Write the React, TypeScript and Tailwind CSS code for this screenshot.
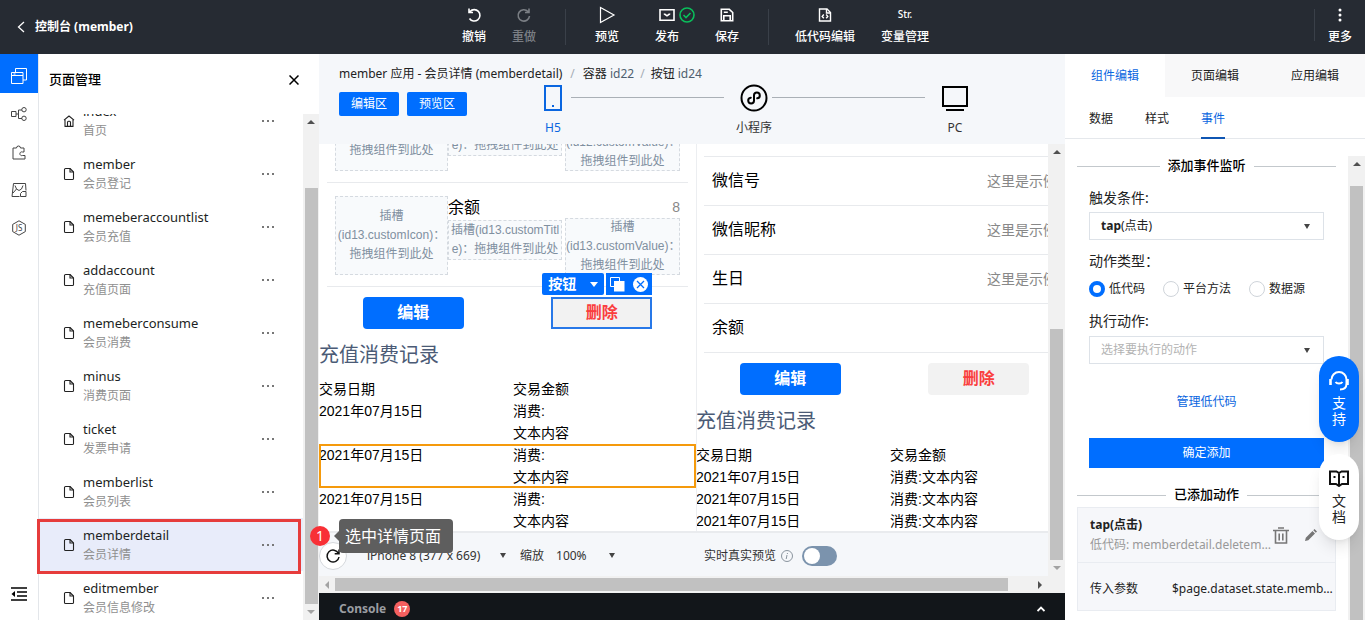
import { useState } from 'react'
import type { ReactNode } from 'react'

interface PageItem {
  name: string
  title: string
  home?: boolean
}

const pages: PageItem[] = [
  { name: 'index', title: '首页', home: true },
  { name: 'member', title: '会员登记' },
  { name: 'memeberaccountlist', title: '会员充值' },
  { name: 'addaccount', title: '充值页面' },
  { name: 'memeberconsume', title: '会员消费' },
  { name: 'minus', title: '消费页面' },
  { name: 'ticket', title: '发票申请' },
  { name: 'memberlist', title: '会员列表' },
  { name: 'memberdetail', title: '会员详情' },
  { name: 'editmember', title: '会员信息修改' },
]

const ACTIVE_PAGE = 'memberdetail'

function ToolButton({ icon, label, wide, disabled }: { icon: ReactNode; label: string; wide?: boolean; disabled?: boolean }) {
  return (
    <button
      disabled={disabled}
      className={`flex flex-col items-center text-xs font-medium ${wide ? 'w-20' : 'w-[50px]'} ${
        disabled ? 'text-[#7b7f85]' : 'text-white'
      }`}
    >
      <span className="flex h-5 items-center justify-center gap-1">{icon}</span>
      <span className="mt-0.5 leading-5">{label}</span>
    </button>
  )
}

function Arrow({ dir, muted }: { dir: 'up' | 'down' | 'left' | 'right'; muted?: boolean }) {
  const points = {
    up: '4,10 8,6 12,10',
    down: '4,6 8,10 12,6',
    left: '10,4 6,8 10,12',
    right: '6,4 10,8 6,12',
  }
  return (
    <svg viewBox="0 0 16 16" className={`h-4 w-4 flex-none ${muted ? 'fill-[#a3a3a3]' : 'fill-[#505050]'}`}>
      <polygon points={points[dir]} />
    </svg>
  )
}

function Caret({ className }: { className: string }) {
  return (
    <svg viewBox="0 0 6 5" className={`pointer-events-none h-[5px] w-1.5 flex-none ${className}`}>
      <path d="M0 0h6L3 5z" fill="currentColor" />
    </svg>
  )
}

function FileIcon() {
  return (
    <svg viewBox="0 0 12 14" className="h-3.5 w-3 flex-none" fill="none" stroke="#222" strokeWidth="1.1">
      <path d="M7 1.5H2.6a1.1 1.1 0 0 0-1.1 1.1v8.8a1.1 1.1 0 0 0 1.1 1.1h6.8a1.1 1.1 0 0 0 1.1-1.1V5z" strokeLinejoin="round" />
      <path d="M7 1.5V5h3.5" />
    </svg>
  )
}

function HomeIcon() {
  return (
    <svg viewBox="0 0 12 14" className="h-3.5 w-3 flex-none" fill="none" stroke="#222" strokeWidth="1.1">
      <path d="M1 6.2 6 2l5 4.2M2 5.5v6.9h8V5.5" strokeLinejoin="round" />
      <path d="M4.5 12.4V8.2a1 1 0 0 1 1-1h1a1 1 0 0 1 1 1v4.2" />
    </svg>
  )
}

function Header() {
  return (
    <header className="flex h-[54px] flex-none bg-[#262b33] text-white">
      <a href="#" className="flex w-[449px] flex-none items-center gap-2.5 pl-[17px] text-xs font-bold">
        <svg viewBox="0 0 8 12" className="h-3 w-2" fill="none" stroke="currentColor" strokeWidth="1.3">
          <path d="M7 1 1.5 6 7 11" />
        </svg>
        控制台 (member)
      </a>
      <div className="flex pt-[5px]">
        <ToolButton
          label="撤销"
          icon={
            <svg viewBox="0 0 16 16" className="h-4 w-4" fill="none" stroke="currentColor" strokeWidth="1.6">
              <path d="M3 1.5v4h4M4 4.5A5.7 5.7 0 1 1 3.5 11.5" />
            </svg>
          }
        />
        <ToolButton
          label="重做"
          disabled
          icon={
            <svg viewBox="0 0 16 16" className="h-4 w-4" fill="none" stroke="currentColor" strokeWidth="1.6">
              <path d="M13 1.5v4H9M12 4.5A5.7 5.7 0 1 0 13.5 9" />
            </svg>
          }
        />
      </div>
      <div className="mx-4 my-[9px] w-px bg-[#3a4049]" />
      <div className="flex gap-2.5 pt-[5px]">
        <ToolButton
          label="预览"
          icon={
            <svg viewBox="0 0 18 18" className="h-[18px] w-[18px]" fill="none" stroke="currentColor" strokeWidth="1.2">
              <path d="M2.5 1.5v15L16 9z" />
            </svg>
          }
        />
        <ToolButton
          label="发布"
          icon={
            <>
              <svg viewBox="0 0 16 14" className="ml-5 h-3.5 w-4 flex-none" fill="none" stroke="currentColor" strokeWidth="1.6">
                <path d="M1 1.8h14v10.4H1zM5.5 5.5V6L8 7.8 10.5 6v-.5" />
              </svg>
              <svg viewBox="0 0 16 16" className="h-4 w-4 flex-none" fill="none" stroke="#0abf5b" strokeWidth="1.6">
                <circle cx="8" cy="8" r="7" />
                <path d="m4.5 8 2.5 2.5L11.5 6" />
              </svg>
            </>
          }
        />
        <ToolButton
          label="保存"
          icon={
            <svg viewBox="0 0 14 14" className="h-3.5 w-3.5" fill="none" stroke="currentColor" strokeWidth="1.6">
              <path d="M1.3 1.3h8l3.4 3.2v8.2H1.3z" />
              <path d="M3.8 12.5V7.8h6.4v4.7M3.8 4.3h4" />
            </svg>
          }
        />
      </div>
      <div className="mx-4 my-[9px] w-px bg-[#3a4049]" />
      <div className="flex pt-[5px]">
        <ToolButton
          label="低代码编辑"
          wide
          icon={
            <svg viewBox="0 0 14 14" className="h-3.5 w-3.5" fill="none" stroke="currentColor" strokeWidth="1.4">
              <path d="M1.5 1H9l3.5 3.5V13h-11z" />
              <path d="M8.5 1v4h4M5.8 6.5 4.2 8.4l1.6 1.9M8.2 6.5l1.6 1.9-1.6 1.9" />
            </svg>
          }
        />
        <ToolButton label="变量管理" wide icon={<span className="text-[10px]">Str.</span>} />
      </div>
      <div className="ml-auto flex pt-[5px]">
        <div className="my-1 h-8 w-px bg-[#3a4049]" />
        <ToolButton
          label="更多"
          icon={
            <svg viewBox="0 0 4 14" className="h-3.5 w-1" fill="currentColor">
              <circle cx="2" cy="2" r="1.5" />
              <circle cx="2" cy="7" r="1.5" />
              <circle cx="2" cy="12" r="1.5" />
            </svg>
          }
        />
      </div>
    </header>
  )
}

function SideNav() {
  const item = 'flex h-[38px] w-full items-center justify-center pt-1'
  const line = { fill: 'none', stroke: 'currentColor', strokeWidth: 1 }
  return (
    <nav className="flex w-[39px] flex-none flex-col border-r border-[#e3e6ea] bg-white text-[#444]">
      <button aria-label="页面" className="flex h-[39px] w-[38px] items-center justify-center bg-[#006eff] pt-1 text-white">
        <svg viewBox="0 0 16 16" className="h-4 w-4" {...line}>
          <path d="M.5 4.5H12v11H.5zM.5 7.5H12M4.5 4.5v-4h11V12H12M2.5 6h2" />
        </svg>
      </button>
      <button aria-label="数据" className={item}>
        <svg viewBox="0 0 16 16" className="h-4 w-4" {...line}>
          <path d="M.5 5.5H5v5H.5zM5 8h2.5M11 4H7.5v8.5H11" />
          <circle cx="13" cy="3.7" r="2.2" />
          <circle cx="13" cy="12.3" r="2.2" />
        </svg>
      </button>
      <button aria-label="组件" className={item}>
        <svg viewBox="0 0 16 16" className="h-4 w-4" {...line}>
          <path d="M2 4h3.5a2 2 0 1 1 4 0H13v4h-1.500a1.9 1.9 0 1 0 0 3.5H14V15H2z" />
        </svg>
      </button>
      <button aria-label="素材" className={item}>
        <svg viewBox="0 0 16 16" className="h-4 w-4" {...line}>
          <path d="M8.5 14.5H1l1.500-13h12l.5 7M4 3.500 5.500 7 8 8.500 10.500 7 12 3.500M2 11l3.500-4M15 14.500H9.500v-3l2-2H15z" />
        </svg>
      </button>
      <button aria-label="低代码" className={item}>
        <svg viewBox="0 0 16 16" className="h-4 w-4" {...line}>
          <path d="M8 .8 14.3 4.4v7.2L8 15.2 1.7 11.6V4.4z" />
          <text x="8" y="11" textAnchor="middle" fontSize="8" fill="currentColor" stroke="none">JS</text>
        </svg>
      </button>
      <button aria-label="收起" className="mt-auto mb-4 flex h-5 w-full items-center justify-center text-black">
        <svg viewBox="0 0 16 14" className="h-3.5 w-4" fill="none" stroke="currentColor" strokeWidth="1.5">
          <path d="M0 1h16M6 5h10M6 9h10M0 13h16" />
          <path d="M4 4v6L.5 7z" fill="currentColor" stroke="none" />
        </svg>
      </button>
    </nav>
  )
}

function PagePanel() {
  return (
    <aside className="flex w-[280px] flex-none flex-col bg-white">
      <div className="flex h-[60px] flex-none items-center justify-between pr-5 pb-2 pl-2.5">
        <h2 className="text-[13px] font-medium text-black">页面管理</h2>
        <button aria-label="关闭">
          <svg viewBox="0 0 10 10" className="h-2.5 w-2.5" fill="none" stroke="#000" strokeWidth="1.5">
            <path d="m.5.5 9 9M9.5.5l-9 9" />
          </svg>
        </button>
      </div>
      <div className="flex min-h-0 flex-1">
        <ul className="min-w-0 flex-1 overflow-hidden">
          {pages.map((page) => (
            <li
              key={page.name}
              className={`flex h-[53px] items-center pr-[29px] pl-6 first:-mt-5 ${page.name === ACTIVE_PAGE ? 'bg-[#e8ecfa]' : ''}`}
            >
              {page.home ? <HomeIcon /> : <FileIcon />}
              <a href="#" className="ml-2 flex min-w-0 flex-1 flex-col">
                <span className="text-[13px] leading-5 text-[#1c1f24]">{page.name}</span>
                <span className="text-xs leading-[19px] text-[#8f8f8f]">{page.title}</span>
              </a>
              <button aria-label="更多操作">
                <svg viewBox="0 0 12 2" className="h-0.5 w-3 fill-[#777]">
                  <path d="M0 0h2v2H0zM5 0h2v2H5zM10 0h2v2h-2z" />
                </svg>
              </button>
            </li>
          ))}
        </ul>
        <div className="flex w-4 flex-none flex-col items-center bg-[#f1f1f1]">
          <Arrow dir="up" />
          <div className="h-[58px]" />
          <div className="w-[13px] flex-1 bg-[#c1c1c1]" />
          <Arrow dir="down" muted />
        </div>
      </div>
    </aside>
  )
}

function DeviceTab({ label, active, children }: { label: string; active?: boolean; children: ReactNode }) {
  return (
    <button className={`flex w-9 flex-none flex-col items-center text-xs ${active ? 'text-[#0a66e0]' : 'text-[#333]'}`}>
      <span className="flex h-7 items-center">{children}</span>
      <span className="mt-1.5 leading-5">{label}</span>
    </button>
  )
}

function CanvasHeader() {
  return (
    <div className="h-[90px] flex-none overflow-hidden px-5 pt-2.5">
      <div className="flex h-5 items-center text-xs text-[#4f5f6f]">
        <span className="text-[#222]">member 应用 - 会员详情 (memberdetail)</span>
        <span className="px-2 text-[#a5adb5]">/</span>
        <span><span className="text-[#222]">容器</span> id22</span>
        <span className="px-1.5 text-[#a5adb5]">/</span>
        <span><span className="text-[#222]">按钮</span> id24</span>
      </div>
      <div className="flex">
        <div className="flex flex-none gap-2 pt-2">
          <button className="h-6 w-[60px] rounded-xs bg-[#006eff] text-xs text-white">编辑区</button>
          <button className="h-6 w-[60px] rounded-xs bg-[#006eff] text-xs text-white">预览区</button>
        </div>
        <div className="ml-[68px] flex">
          <DeviceTab label="H5" active>
            <svg viewBox="0 0 18 26" className="h-[26px] w-[18px]" fill="none" stroke="currentColor" strokeWidth="2">
              <path d="M1 1h16v24H1z" />
              <path d="M8 21h2" />
            </svg>
          </DeviceTab>
          <div className="mt-[13px] mr-3 h-px w-[153px] bg-[#aab0b6]" />
          <DeviceTab label="小程序">
            <svg viewBox="0 0 28 28" className="h-7 w-7" fill="none" stroke="#000" strokeWidth="2">
              <circle cx="14" cy="14" r="12.5" />
              <path d="M10.8 13.7a2.9 2.9 0 1 0 3.2 3v-5.4a2.9 2.9 0 1 1 3.2 3" strokeLinecap="round" />
            </svg>
          </DeviceTab>
          <div className="mt-[13px] mr-3 h-px w-[153px] bg-[#aab0b6]" />
          <DeviceTab label="PC">
            <svg viewBox="0 0 26 26" className="h-[26px] w-[26px]" fill="none" stroke="#000" strokeWidth="2">
              <path d="M1 2h24v19H1zM4 25h18" />
            </svg>
          </DeviceTab>
        </div>
      </div>
    </div>
  )
}

function Slot({ className, children }: { className: string; children: ReactNode }) {
  return (
    <div className={`border border-dashed border-[#d5dae0] bg-[#f8fafc] text-center text-xs leading-[19px] text-[#7f8fa0] ${className}`}>
      {children}
    </div>
  )
}

function SlotRow({ id, title, value }: { id: string; title?: string; value?: string }) {
  return (
    <div className="mx-2 flex h-[104px] border-b border-[#e8eaed] px-2 pt-[13px]">
      <Slot className="flex h-[79px] w-[113px] flex-none flex-col justify-center whitespace-nowrap">
        <span>插槽</span>
        <span>({id}.customIcon)：</span>
        <span>拖拽组件到此处</span>
      </Slot>
      <div className="w-[114px] flex-none">
        <div className="h-6 text-base leading-6 text-black">{title}</div>
        <Slot className="overflow-hidden whitespace-nowrap">
          插槽({id}.customTitl
          <br />
          e)：拖拽组件到此处
        </Slot>
      </div>
      <div className="ml-[3px] min-w-0 flex-1">
        <div className="h-[22px] text-right text-sm leading-[22px] text-[#888]">{value}</div>
        <Slot className="flex h-[57px] flex-col justify-center whitespace-nowrap">
          <span>插槽</span>
          <span>({id}.customValue)：</span>
          <span>拖拽组件到此处</span>
        </Slot>
      </div>
    </div>
  )
}

function SelectionTag() {
  return (
    <div className="absolute right-0 bottom-full mb-0.5 flex h-[22px] gap-0.5 text-sm font-bold text-white">
      <button className="flex w-[62px] items-center justify-between rounded-xs bg-[#006eff] px-1.5 whitespace-nowrap">
        按钮
        <svg viewBox="0 0 8 5" className="h-[5px] w-2" fill="currentColor">
          <path d="M0 0h8L4 5z" />
        </svg>
      </button>
      <div className="flex w-[46px] items-center justify-between bg-[#006eff] px-1">
        <button aria-label="复制">
          <svg viewBox="0 0 15 15" className="h-[15px] w-[15px]">
            <path d="M.5.5h9v9h-9z" fill="none" stroke="currentColor" />
            <path d="M4 4h10.5v10.5H4z" fill="currentColor" />
          </svg>
        </button>
        <button aria-label="删除组件">
          <svg viewBox="0 0 15 15" className="h-[15px] w-[15px]">
            <circle cx="7.5" cy="7.5" r="7.5" fill="currentColor" />
            <path d="m4 4 7 7M11 4l-7 7" stroke="#006eff" strokeWidth="1.3" />
          </svg>
        </button>
      </div>
    </div>
  )
}

function DetailBody({ editing }: { editing?: boolean }) {
  return (
    <>
      <div className="grid grid-cols-2 justify-items-center pt-2.5 text-base font-bold">
        <button className="h-8 w-[101px] rounded-sm bg-[#006eff] text-white">编辑</button>
        <div className="relative">
          <button className={`h-8 w-[101px] bg-[#f2f2f2] text-[#fa3e3e] ${editing ? 'border-2 border-[#2878e8]' : 'rounded-sm'}`}>删除</button>
          {editing && <SelectionTag />}
        </div>
      </div>
      <h3 className="mt-3 mb-[9px] text-xl leading-7 text-[#4b5b76]">充值消费记录</h3>
      <table className="w-full table-fixed text-left text-sm leading-[22px] text-black">
        <thead>
          <tr>
            <th className="w-[194px] p-0 font-normal">交易日期</th>
            <th className="p-0 font-normal">交易金额</th>
          </tr>
        </thead>
        <tbody>
          {[0, 1, 2].map((row) => (
            <tr key={row} className={editing && row === 1 ? 'outline-2 -outline-offset-2 outline-[#f59a0c]' : ''}>
              <td className="p-0 align-top">2021年07月15日</td>
              <td className="p-0">
                消费:
                {editing && <br />}
                文本内容
              </td>
            </tr>
          ))}
        </tbody>
      </table>
    </>
  )
}

function PreviewRow({ label, value }: { label: string; value?: string }) {
  return (
    <div className="mx-2 flex h-[49px] items-center justify-between border-b border-[#e8eaed] px-2">
      <span className="text-base text-black">{label}</span>
      <span className="text-sm text-[#888]">{value}</span>
    </div>
  )
}

function CanvasFooter() {
  const [live, setLive] = useState(false)
  return (
    <div className="flex h-[43px] flex-none items-center pt-0.5 text-xs text-[#333]">
      <div className="flex flex-1 items-center">
        <button aria-label="刷新" className="flex h-7 w-7 items-center justify-center rounded-full border border-[#d5d8dc] bg-white">
          <svg viewBox="0 0 16 16" className="h-4 w-4" fill="none" stroke="#111" strokeWidth="1.5">
            <path d="M14 1.5v4.3H9.7M13.500 5.500A6 6 0 1 0 14 9" />
          </svg>
        </button>
        <select aria-label="设备" className="ml-5 w-[133px] appearance-none">
          <option>iPhone 8 (377 x 669)</option>
        </select>
        <Caret className="text-[#444]" />
        <label htmlFor="zoom" className="ml-3.5">缩放</label>
        <select id="zoom" className="ml-3 w-[53px] appearance-none">
          <option>100%</option>
        </select>
        <Caret className="text-[#444]" />
      </div>
      <label className="relative mr-[211px] flex items-center">
        实时真实预览
        <svg viewBox="0 0 12 12" className="mr-[9px] ml-[5px] h-3 w-3" fill="none" stroke="#8a949e" strokeWidth="1">
          <circle cx="6" cy="6" r="5.5" />
          <path d="M6.5 3 6.3 4M6 5l-.8 4" />
        </svg>
        <input type="checkbox" checked={live} onChange={(e) => setLive(e.target.checked)} className="peer sr-only" />
        <span className="flex h-5 w-[35px] items-center rounded-full bg-[#7b93ad] px-0.5 peer-checked:justify-end peer-checked:bg-[#006eff]">
          <span className="h-4 w-4 rounded-full bg-white" />
        </span>
      </label>
    </div>
  )
}

function Canvas() {
  return (
    <div className="flex min-h-0 flex-1 overflow-hidden">
      <div className="flex min-w-0 flex-1 flex-col">
        <div className="flex min-h-0 flex-1 overflow-hidden border-b-2 border-[#e9ebee] font-['Liberation_Sans','Noto_Sans_CJK_SC',sans-serif]">
          <div className="relative w-[377px] flex-none bg-white shadow-[1px_0_0_#eceef1]">
            <div className="-mt-[65px]">
              <SlotRow id="id12" />
              <SlotRow id="id13" title="余额" value="8" />
            </div>
            <DetailBody editing />
          </div>
          <div className="w-[377px] flex-none bg-white">
            <div className="mx-2 h-[13px] border-b border-[#e8eaed]" />
            <PreviewRow label="微信号" value="这里是示例" />
            <PreviewRow label="微信昵称" value="这里是示例" />
            <PreviewRow label="生日" value="这里是示例" />
            <PreviewRow label="余额" />
            <DetailBody />
          </div>
        </div>
        <CanvasFooter />
      </div>
      <div className="flex w-[17px] flex-none flex-col items-center bg-[#f1f1f1]">
        <Arrow dir="up" />
        <div className="h-[169px]" />
        <div className="w-[13px] flex-1 bg-[#c1c1c1]" />
        <Arrow dir="down" muted />
      </div>
    </div>
  )
}

function Divider({ children }: { children: ReactNode }) {
  return (
    <h3 className="flex h-5 items-center gap-2 text-[13px] font-medium whitespace-nowrap text-black before:h-px before:flex-1 before:bg-[#c3c8cc] after:h-px after:flex-1 after:bg-[#c3c8cc]">
      {children}
    </h3>
  )
}

const actionTypes = ['低代码', '平台方法', '数据源']

function EventPanel() {
  const [action, setAction] = useState('低代码')
  return (
    <aside className="flex w-[300px] flex-none flex-col bg-white text-xs text-[#222]">
      <div className="grid h-[43px] flex-none grid-cols-3">
        <button className="text-[#0a66e0]">组件编辑</button>
        <button className="bg-[#f8f8f9]">页面编辑</button>
        <button className="bg-[#f8f8f9]">应用编辑</button>
      </div>
      <div className="flex h-[42px] flex-none gap-8 border-b border-[#e5e8ec] px-6">
        <button className="pt-0.5">数据</button>
        <button className="pt-0.5">样式</button>
        <button className="-mb-px border-b-2 border-[#0f56b3] pt-1 text-[#0a66e0]">事件</button>
      </div>
      <div className="flex min-h-0 flex-1 pt-[17px]">
        <div className="min-w-0 flex-1 px-3">
          <Divider>添加事件监听</Divider>
          <div className="flex flex-col px-3">
            <label htmlFor="trigger" className="mt-3 text-sm leading-5">触发条件:</label>
            <div className="relative mt-1 flex h-7 items-center justify-between border border-[#dde2e8] px-[11px]">
              <span aria-hidden="true"><b>tap</b>(点击)</span>
              <Caret className="mr-0.5 text-[#444]" />
              <select id="trigger" className="absolute inset-0 h-full w-full opacity-0">
                <option>tap(点击)</option>
              </select>
            </div>
            <div className="mt-[11px] text-sm leading-5">动作类型：</div>
            <div className="mt-2 flex h-5 items-center gap-[18px] whitespace-nowrap">
              {actionTypes.map((type) => (
                <label key={type} className="flex items-center gap-1">
                  <input
                    type="radio"
                    name="action"
                    checked={action === type}
                    onChange={() => setAction(type)}
                    className="h-4 w-4 appearance-none rounded-full border border-[#cfd4da] checked:border-4 checked:border-[#006eff]"
                  />
                  {type}
                </label>
              ))}
            </div>
            <label htmlFor="exec" className="mt-3 text-sm leading-5">执行动作:</label>
            <div className="mt-[5px] flex h-7 items-center border border-[#dde2e8] px-[11px] text-[#b3b3b3]">
              <select id="exec" className="h-full min-w-0 flex-1 appearance-none">
                <option>选择要执行的动作</option>
              </select>
              <Caret className="mr-0.5 text-[#444]" />
            </div>
            <a href="#" className="mt-7 text-center leading-5 text-[#0a66e0]">管理低代码</a>
            <button className="mt-[26px] h-[30px] bg-[#006eff] text-white">确定添加</button>
          </div>
          <div className="mt-[17px]">
            <Divider>已添加动作</Divider>
          </div>
          <div className="mt-0.5 border border-[#e9ecf1] bg-[#f6f7fa]">
            <div className="flex h-[55px] items-center border-b border-[#e9ecf1] pl-3">
              <div className="w-[181px] flex-none leading-5">
                <div className="font-bold">tap(点击)</div>
                <div className="truncate text-[#999]">低代码: memberdetail.deletemember</div>
              </div>
              <button aria-label="删除" className="ml-0.5">
                <svg viewBox="0 0 16 17" className="h-[17px] w-4" fill="none" stroke="#777" strokeWidth="1.6">
                  <path d="M0 3.5h16M5 1h6M2.500 4v12h11V4M6.200 6.500v7M9.800 6.500v7" />
                </svg>
              </button>
              <button aria-label="修改" className="ml-4">
                <svg viewBox="0 0 12 12" className="h-3 w-3 fill-[#777]">
                  <path d="M0 12l.8-3.3L7.5 2 10 4.5l-6.7 6.7zM8.3 1.200 9.500 0 12 2.500l-1.200 1.200z" />
                </svg>
              </button>
            </div>
            <div className="flex h-[47px] items-center pt-1 pl-3">
              <span className="w-[82px] flex-none">传入参数</span>
              <span className="w-[163px] truncate">$page.dataset.state.memberid</span>
            </div>
          </div>
        </div>
        <div className="flex w-[17px] flex-none flex-col items-center bg-[#f1f1f1]">
          <Arrow dir="up" />
          <div className="h-3.5" />
          <div className="w-[13px] flex-1 bg-[#c1c1c1]" />
        </div>
      </div>
    </aside>
  )
}

function FloatingHelp() {
  return (
    <div className="absolute top-[356px] right-1.5 flex flex-col gap-3 text-sm leading-4">
      <button className="flex h-[86px] w-10 flex-col items-center rounded-full bg-[#006eff] px-3 pt-3.5 text-white shadow-lg">
        <svg viewBox="0 0 20 21" className="mb-1 h-[21px] w-5 flex-none" fill="none" stroke="currentColor" strokeWidth="2">
          <path d="M2.5 9.5a7.5 7.5 0 0 1 15 0v4c0 3.5-2 6-6.5 6" />
          <path d="M1.5 9v6M18.5 9v6" strokeWidth="2.6" />
          <path d="M6.5 12c1.500 2 5.500 2 7 0" />
        </svg>
        支持
      </button>
      <button className="flex h-[86px] w-10 flex-col items-center rounded-full bg-white px-3 pt-4 text-[#222] shadow-lg">
        <svg viewBox="0 0 20 17" className="mb-1.5 h-[17px] w-5 flex-none" fill="none" stroke="#111" strokeWidth="2">
          <path d="M1 1.5h6.500L10 3l2.500-1.500H19V14h-6l-3 2-3-2H1zM10 3v12" />
          <path d="M4.5 7h2M13.5 7h2" />
        </svg>
        文档
      </button>
    </div>
  )
}

function GuideStep() {
  return (
    <div className="absolute top-[519px] left-[37px] z-10 flex items-start">
      <div className="h-[55px] w-[264px] border-3 border-[#e63c3c]" />
      <span className="mt-[7px] ml-[9px] flex h-5 w-5 items-center justify-center rounded-full bg-[#f83036] text-sm text-white">1</span>
      <svg viewBox="0 0 5 10" className="mt-3 ml-1 h-2.5 w-[5px] fill-[#5e5e5e]">
        <path d="M5 0v10L0 5z" />
      </svg>
      <span className="flex h-[34px] items-center rounded-sm bg-[#5e5e5e] pr-3 pl-1.5 text-base text-white">选中详情页面</span>
    </div>
  )
}

export default function App() {
  return (
    <div className="relative flex h-screen flex-col overflow-hidden bg-[#f5f7fa] font-['Noto_Sans','Noto_Sans_CJK_SC',sans-serif]">
      <Header />
      <div className="flex min-h-0 flex-1">
        <SideNav />
        <PagePanel />
        <main className="flex min-w-0 flex-1 flex-col">
          <CanvasHeader />
          <Canvas />
          <div className="flex h-[17px] flex-none items-center bg-[#f1f1f1] pr-[17px]">
            <Arrow dir="left" muted />
            <div className="h-[13px] flex-1 bg-[#c1c1c1]" />
            <div className="w-6" />
            <Arrow dir="right" />
          </div>
          <div className="flex h-[27px] flex-none items-center bg-[#12161a] px-5 pt-1 text-xs font-bold text-[#9a9da1]">
            Console
            <span className="ml-2 flex h-4 w-4 items-center justify-center rounded-full bg-[#f5605f] text-[9px] text-white">17</span>
            <button aria-label="展开" className="ml-auto">
              <svg viewBox="0 0 8 6" className="h-1.5 w-2" fill="none" stroke="#fff" strokeWidth="1.8">
                <path d="M.5 5 4 1.5 7.5 5" />
              </svg>
            </button>
          </div>
        </main>
        <EventPanel />
      </div>
      <FloatingHelp />
      <GuideStep />
    </div>
  )
}
